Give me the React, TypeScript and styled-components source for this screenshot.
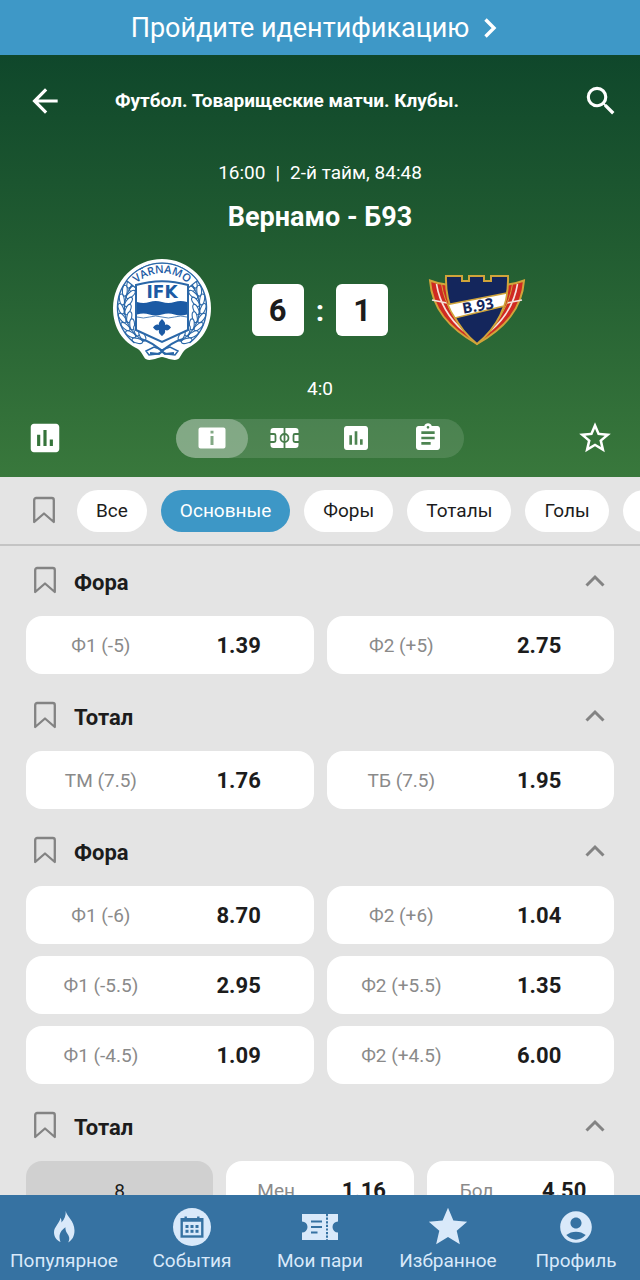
import React, { useState } from "react";
import styled, { createGlobalStyle } from "styled-components";
import {
  MdArrowBack,
  MdSearch,
  MdAssessment,
  MdAssignment,
  MdStarOutline,
  MdStar,
  MdAccountCircle,
} from "react-icons/md";

const colors = {
  banner: "#3e98c7",
  accent: "#3d97c6",
  page: "#e4e4e4",
  ink: "#1c1c1c",
  muted: "#8a8a8a",
  icon: "#838383",
  nav: "#3672a2",
  navInk: "#d9e9fa",
};

const GlobalStyle = createGlobalStyle`
  *, *::before, *::after { box-sizing: border-box; }
  body {
    margin: 0;
    background: ${colors.page};
    color: ${colors.ink};
    font-family: Roboto, "Noto Sans", sans-serif;
  }
  button, a { font: inherit; color: inherit; }
  button { border: 0; padding: 0; background: none; cursor: pointer; }
  a { text-decoration: none; }
  h1, h2, p { margin: 0; }
  svg { display: block; }
`;

const Shell = styled.div`
  display: flex;
  flex-direction: column;
  height: 100vh;
`;

const Banner = styled.a`
  display: flex;
  flex: none;
  align-items: center;
  justify-content: center;
  gap: 14px;
  height: 55px;
  padding-right: 12px;
  background: ${colors.banner};
  color: #fff;
  font-size: 27px;
  line-height: 32px;
`;

const MatchHeader = styled.header`
  flex: none;
  padding: 19px 24px 18px;
  background: linear-gradient(#0f472b, #215c31 45%, #39783c);
  color: #fff;
`;

const TopBar = styled.div`
  display: flex;
  align-items: center;
  height: 54px;
  margin-right: -6px;
`;

const IconButton = styled.button`
  display: grid;
  place-content: center;
  flex: none;
  width: 42px;
  height: 42px;
  color: inherit;
`;

const League = styled.p`
  flex: 1;
  padding-left: 49px;
  font-size: 19px;
  line-height: 24px;
  font-weight: 700;
`;

const MatchInfo = styled.div`
  display: flex;
  flex-direction: column;
  align-items: center;
  padding-top: 33px;
`;

const Clock = styled.p`
  display: flex;
  gap: 10px;
  font-size: 19px;
  line-height: 24px;
`;

const Teams = styled.h1`
  padding-top: 16px;
  font-size: 27px;
  line-height: 32px;
  font-weight: 700;
`;

const ScoreRow = styled.div`
  display: grid;
  grid-template-columns: 1fr auto 1fr;
  align-items: center;
  width: 100%;
  height: 104px;
  margin-top: 25px;
`;

const CrestSlot = styled.div<{ $side: "home" | "away" }>`
  display: flex;
  justify-content: ${(p) => (p.$side === "home" ? "flex-end" : "flex-start")};
  padding: 0 40px;
`;

const Score = styled.div`
  display: flex;
  align-items: center;
  gap: 12px;
  font-size: 30px;
  font-weight: 700;
`;

const Digit = styled.span`
  display: grid;
  place-items: center;
  width: 52px;
  height: 52px;
  border-radius: 6px;
  background: #fff;
  color: ${colors.ink};
  font-size: 31px;
`;

const HalfScore = styled.p`
  padding-top: 15px;
  font-size: 19px;
  line-height: 24px;
`;

const ToolRow = styled.div`
  display: flex;
  align-items: center;
  justify-content: space-between;
  padding-top: 16px;
`;

const ViewSwitch = styled.div`
  display: flex;
  border-radius: 20px;
  background: rgba(255, 255, 255, 0.12);
`;

const ViewButton = styled.button<{ $active?: boolean }>`
  display: grid;
  place-content: center;
  width: 72px;
  height: 39px;
  border-radius: 20px;
  background: ${(p) => (p.$active ? "rgba(255,255,255,0.3)" : "transparent")};
`;

const FilterBar = styled.nav`
  display: flex;
  flex: none;
  align-items: center;
  gap: 14px;
  height: 69px;
  padding-left: 25px;
  border-bottom: 2px solid #c4c4c4;
  overflow-x: auto;
  scrollbar-width: none;
`;

const SaveButton = styled.button`
  display: grid;
  place-content: center;
  flex: none;
  width: 38px;
  height: 40px;
  color: ${colors.icon};
`;

const Chip = styled.button<{ $active: boolean }>`
  flex: none;
  height: 42px;
  padding: 0 19px;
  border-radius: 21px;
  background: ${(p) => (p.$active ? colors.accent : "#fff")};
  color: ${(p) => (p.$active ? "#fff" : colors.ink)};
  font-size: 19px;
  line-height: 24px;
`;

const Markets = styled.main`
  flex: 1;
  min-height: 0;
  padding: 0 26px;
  overflow-y: auto;
  scrollbar-width: none;
`;

const Market = styled.section`
  padding-bottom: 7px;
`;

const MarketHead = styled.div`
  display: flex;
  align-items: center;
  height: 70px;
`;

const MarketTitle = styled.h2`
  flex: 1;
  padding: 3px 0 0 10px;
  font-size: 22px;
  line-height: 28px;
  font-weight: 700;
`;

const ToggleButton = styled.button`
  display: grid;
  place-content: center;
  width: 38px;
  height: 40px;
  color: ${colors.icon};
`;

const Outcomes = styled.div<{ $columns: number }>`
  display: grid;
  grid-template-columns: repeat(${(p) => p.$columns}, minmax(0, 1fr));
  gap: 12px 13px;
`;

const Outcome = styled.button`
  display: grid;
  grid-template-columns: 1fr 1fr;
  align-items: center;
  height: 58px;
  padding: 0 6px;
  border-radius: 16px;
  background: #fff;
`;

const Line = styled.div`
  display: grid;
  place-items: center;
  height: 58px;
  border-radius: 16px;
  background: #d0d0d0;
  font-size: 19px;
`;

const OutcomeName = styled.span`
  color: ${colors.muted};
  font-size: 19px;
`;

const Odds = styled.span`
  font-size: 22px;
  font-weight: 700;
`;

const BottomNav = styled.nav`
  display: grid;
  flex: none;
  grid-template-columns: repeat(5, 1fr);
  height: 85px;
  background: ${colors.nav};
`;

const NavLink = styled.a`
  display: flex;
  flex-direction: column;
  align-items: center;
  padding-top: 12px;
  color: ${colors.navInk};
  font-size: 19px;
  line-height: 24px;
  white-space: nowrap;
`;

const NavIcon = styled.span`
  display: grid;
  place-content: center;
  height: 40px;
  margin-bottom: 2px;
`;

const ChevronRight = () => (
  <svg width="14" height="22" viewBox="0 0 14 22" fill="none" stroke="currentColor" strokeWidth="3.4" aria-hidden="true">
    <path d="M2.500 2.500l8.500 8.500-8.500 8.500" />
  </svg>
);

const ChevronUp = () => (
  <svg width="20" height="14" viewBox="0 0 20 14" fill="none" stroke="currentColor" strokeWidth="3" aria-hidden="true">
    <path d="M1.500 11.500L10 3l8.500 8.500" />
  </svg>
);

const BookmarkIcon = () => (
  <svg width="24" height="30" viewBox="0 0 24 30" fill="none" stroke="currentColor" strokeWidth="2.300" strokeLinejoin="round" aria-hidden="true">
    <path d="M2.200 26V4a2 2 0 0 1 2-2h15.600a2 2 0 0 1 2 2v22L12 17.500z" />
  </svg>
);

const InfoIcon = () => (
  <svg width="28" height="22" viewBox="0 0 28 22" fill="currentColor" aria-hidden="true">
    <path fillRule="evenodd" d="M2.500 0.500h23A2 2 0 0 1 27.500 2.500v17a2 2 0 0 1-2 2h-23a2 2 0 0 1-2-2v-17a2 2 0 0 1 2-2zM12.500 3.800v2.800h3V3.800zM12.500 9v9h3V9z" />
  </svg>
);

const PitchIcon = () => (
  <svg width="29" height="22" viewBox="0 0 29 22" aria-hidden="true">
    <rect x="0.500" y="1" width="28" height="20" rx="3" fill="#fff" />
    <g fill="none" stroke="#477d4b" strokeWidth="1.800">
      <path d="M14.500 0v22M0 7h4a1.500 1.500 0 0 1 1.500 1.500v5A1.500 1.500 0 0 1 4 15H0M29 7h-4a1.500 1.500 0 0 0-1.500 1.500v5A1.500 1.500 0 0 0 25 15h4" />
      <circle cx="14.500" cy="11" r="4" />
    </g>
  </svg>
);

const FlameIcon = () => (
  <svg width="22" height="34" viewBox="-1 -1 22 34" fill="currentColor" aria-hidden="true">
    <path d="M11.700 0c.6 5 8.800 9.500 8.800 19.500 0 5.500-2.200 9.500-6.300 12 1.200-2.300 1.500-4.500.4-6.700-1.200-2.500-3.300-4.300-3.200-8.500-3 2-5.300 4.700-5.800 8-.3 2.300.1 4.300.9 6.700C2.200 29 0 25.500 0 21.200c0-5.200 5.300-8.400 6.500-14.400.9 1.700 1.100 3 .9 4.700C10.500 8.300 12 4.500 11.700 0z" />
  </svg>
);

const CalendarIcon = () => (
  <svg width="38" height="38" viewBox="0 0 38 38" aria-hidden="true">
    <circle cx="19" cy="19" r="19" fill={colors.navInk} />
    <g fill="none" stroke={colors.nav} strokeWidth="2.400">
      <rect x="8.700" y="11.200" width="20.600" height="17.300" />
      <path d="M12.700 8.500v4M25.300 8.500v4M8 12.500h22" />
    </g>
    <g fill={colors.nav}>
      {[12.5, 17.5, 22.5].map((x) =>
        [17, 21.8].map((y) => <rect key={`${x}-${y}`} x={x} y={y} width="3" height="3" />)
      )}
    </g>
  </svg>
);

const TicketIcon = () => (
  <svg width="36" height="26" viewBox="0 0 36 26" aria-hidden="true">
    <path d="M0 0h36v7.500a5.500 5.500 0 0 0 0 11V26H0v-7.500a5.500 5.500 0 0 0 0-11z" fill={colors.navInk} />
    <g stroke={colors.nav} strokeWidth="2" fill="none">
      <path d="M9 7.500h11M9 13h11M9 18.500h6.500" />
      <path d="M25 0v26" strokeDasharray="2.200 1.400" />
    </g>
  </svg>
);

const leafAngles = [-38, -25, -12, 1, 14, 27, 40, 53];

const Wreath = () => (
  <g fill="#fff" stroke="#2a67a8" strokeWidth="1.1">
    {leafAngles.map((a) => (
      <g key={a} transform={`rotate(${a} 50 50)`}>
        <ellipse cx="91" cy="50" rx="2.400" ry="5.500" transform="rotate(22 91 50)" />
        <ellipse cx="84" cy="51" rx="2.400" ry="5.500" transform="rotate(-24 84 51)" />
        <path d="M87.500 44v12" />
      </g>
    ))}
  </g>
);

const IfkCrest = () => (
  <svg width="100" height="104" viewBox="0 0 100 104" role="img" aria-label="IFK Värnamo">
    <defs>
      <path id="crest-arc" d="M17 35.500A37 37 0 0 1 83 35.500" />
    </defs>
    <path d="M50 1a49 49 0 0 1 49 49c0 20-10 34-25 41-3 2-4 5-6 8-2 4-7 3-11 2-3-1-5-2-7-2s-4 1-7 2c-4 1-9 2-11-2-2-3-3-6-6-8C11 84 1 70 1 50A49 49 0 0 1 50 1z" fill="#fff" />
    <Wreath />
    <g transform="translate(100 0) scale(-1 1)"><Wreath /></g>
    <g fill="none" stroke="#2a67a8">
      <path d="M22.500 85A44.500 44.500 0 1 1 77.500 85" strokeWidth="1.400" />
      <path d="M29 81c8 2 15 6 24 15l9-1M71 81c-8 2-15 6-24 15l-9-1" strokeWidth="2" />
      <path d="M34 93l8-4 8 3 8-3 8 4-3 4-8-1-5-2-5 2-8 1z" strokeWidth="1.500" />
    </g>
    <path d="M14.500 22.500L25 31C38 22 62 22 75 31L85.500 22.500A45 45 0 0 0 14.500 22.500z" fill="#fff" stroke="#2a67a8" strokeWidth="1.200" />
    <path d="M24 27c17-5 35-5 52 0v45L50 84 24 72z" fill="#fff" stroke="#2a67a8" strokeWidth="2" />
    <path d="M25 44q6.500 2 12.500 0t12.500 0 12.500 0 12.500 0v12.500q-6.500 2-12.500 0t-12.500 0-12.500 0-12.500 0z" fill="#1b5aa4" />
    <path d="M25 59q6.500 2 12.500 0t12.500 0 12.500 0 12.500 0" fill="none" stroke="#2a67a8" strokeWidth="0.800" />
    <path d="M50 61c3 3 3.500 4 3 6 2.500-.8 3.500-.5 6 2.500-2.500 3-3.500 3.500-6 2.500.5 2.500 0 3.500-3 6-3-2.500-3.500-3.500-3-6-2.500 1-3.500.5-6-2.500 2.500-3 3.500-3.300 6-2.500-.5-2 0-3 3-6z" fill="#1b5aa4" />
    <text x="50" y="40" textAnchor="middle" fontFamily="DejaVu Sans, sans-serif" fontSize="17" fontWeight="700" fill="#1b5aa4">IFK</text>
    <text fontFamily="Open Sans, sans-serif" fontSize="11" fontWeight="600" fill="#1b5aa4">
      <textPath href="#crest-arc" startOffset="50%" textAnchor="middle">VÄRNAMO</textPath>
    </text>
  </svg>
);

const B93Crest = () => (
  <svg width="98" height="72" viewBox="0 0 98 72" role="img" aria-label="B.93">
    <path d="M2 6.500c5 2 10 3.500 16 4h62c6-.5 11-2 16-4-2 28-19 47.500-47 63.500C21 54 4 34.500 2 6.500z" fill="#cf2a22" stroke="#d0a43a" strokeWidth="2" />
    <path d="M4 26l15 3M94 26l-15 3M8.500 10c3 18 13 35 27 47M89.500 10c-3 18-13 35-27 47" fill="none" stroke="#f6e3dc" strokeWidth="1.600" />
    <path d="M13.500 10c3 20 14 39 31 54M84.500 10c-3 20-14 39-31 54" fill="none" stroke="#d0a43a" strokeWidth="1" />
    <path d="M18 2h16v5h7V2h15v5h7V2h17c1 28-9 50-31 68C27 52 17 30 18 2z" fill="#14265c" stroke="#d0a43a" strokeWidth="2" />
    <path d="M20 30.500l59-11.500c-.6 5-1.600 9-3 13L27 44c-3-4.500-5.500-9-7-13.500z" fill="#fff" stroke="#d0a43a" strokeWidth="1.500" />
    <text x="50" y="37" transform="rotate(-10 50 32)" textAnchor="middle" fontFamily="Open Sans, sans-serif" fontSize="15" fontWeight="700" fill="#14265c">B.93</text>
  </svg>
);

type Pick = { name: string; odds: string };
type MarketData = { title: string; line?: string; picks: Pick[] };

const markets: MarketData[] = [
  { title: "Фора", picks: [{ name: "Ф1 (-5)", odds: "1.39" }, { name: "Ф2 (+5)", odds: "2.75" }] },
  { title: "Тотал", picks: [{ name: "ТМ (7.5)", odds: "1.76" }, { name: "ТБ (7.5)", odds: "1.95" }] },
  {
    title: "Фора",
    picks: [
      { name: "Ф1 (-6)", odds: "8.70" },
      { name: "Ф2 (+6)", odds: "1.04" },
      { name: "Ф1 (-5.5)", odds: "2.95" },
      { name: "Ф2 (+5.5)", odds: "1.35" },
      { name: "Ф1 (-4.5)", odds: "1.09" },
      { name: "Ф2 (+4.5)", odds: "6.00" },
    ],
  },
  { title: "Тотал", line: "8", picks: [{ name: "Мен", odds: "1.16" }, { name: "Бол", odds: "4.50" }] },
];

const filters = ["Все", "Основные", "Форы", "Тоталы", "Голы", "Таймы"];

const navItems = [
  { label: "Популярное", icon: <FlameIcon /> },
  { label: "События", icon: <CalendarIcon /> },
  { label: "Мои пари", icon: <TicketIcon /> },
  { label: "Избранное", icon: <MdStar size={46} /> },
  { label: "Профиль", icon: <MdAccountCircle size={38} /> },
];

const views = [
  { label: "Информация", icon: <InfoIcon /> },
  { label: "Поле", icon: <PitchIcon /> },
  { label: "Статистика", icon: <MdAssessment size={32} /> },
  { label: "События матча", icon: <MdAssignment size={32} /> },
];

function MarketBlock({ market }: { market: MarketData }) {
  const [open, setOpen] = useState(true);
  return (
    <Market>
      <MarketHead>
        <SaveButton aria-label="Сохранить"><BookmarkIcon /></SaveButton>
        <MarketTitle>{market.title}</MarketTitle>
        <ToggleButton aria-label="Свернуть" aria-expanded={open} onClick={() => setOpen(!open)}>
          <ChevronUp />
        </ToggleButton>
      </MarketHead>
      {open && (
        <Outcomes $columns={market.line ? 3 : 2}>
          {market.line && <Line>{market.line}</Line>}
          {market.picks.map((pick) => (
            <Outcome key={pick.name}>
              <OutcomeName>{pick.name}</OutcomeName>
              <Odds>{pick.odds}</Odds>
            </Outcome>
          ))}
        </Outcomes>
      )}
    </Market>
  );
}

export default function App() {
  const [filter, setFilter] = useState("Основные");
  const [view, setView] = useState(0);
  return (
    <>
      <GlobalStyle />
      <Shell>
        <Banner href="#identification">
          Пройдите идентификацию
          <ChevronRight />
        </Banner>
        <MatchHeader>
          <TopBar>
            <IconButton aria-label="Назад"><MdArrowBack size={38} /></IconButton>
            <League>Футбол. Товарищеские матчи. Клубы.</League>
            <IconButton aria-label="Поиск"><MdSearch size={38} /></IconButton>
          </TopBar>
          <MatchInfo>
            <Clock><span>16:00</span><span>|</span><span>2-й тайм, 84:48</span></Clock>
            <Teams>Вернамо - Б93</Teams>
            <ScoreRow>
              <CrestSlot $side="home"><IfkCrest /></CrestSlot>
              <Score><Digit>6</Digit>:<Digit>1</Digit></Score>
              <CrestSlot $side="away"><B93Crest /></CrestSlot>
            </ScoreRow>
            <HalfScore>4:0</HalfScore>
          </MatchInfo>
          <ToolRow>
            <IconButton aria-label="Статистика матча"><MdAssessment size={38} /></IconButton>
            <ViewSwitch>
              {views.map((item, i) => (
                <ViewButton key={item.label} aria-label={item.label} $active={i === view} onClick={() => setView(i)}>
                  {item.icon}
                </ViewButton>
              ))}
            </ViewSwitch>
            <IconButton aria-label="В избранное"><MdStarOutline size={38} /></IconButton>
          </ToolRow>
        </MatchHeader>
        <FilterBar aria-label="Рынки">
          <SaveButton aria-label="Сохранённые"><BookmarkIcon /></SaveButton>
          {filters.map((name) => (
            <Chip key={name} $active={name === filter} onClick={() => setFilter(name)}>{name}</Chip>
          ))}
        </FilterBar>
        <Markets>
          {markets.map((market, i) => <MarketBlock key={i} market={market} />)}
        </Markets>
        <BottomNav aria-label="Основная навигация">
          {navItems.map((item) => (
            <NavLink key={item.label} href="#">
              <NavIcon>{item.icon}</NavIcon>
              {item.label}
            </NavLink>
          ))}
        </BottomNav>
      </Shell>
    </>
  );
}
